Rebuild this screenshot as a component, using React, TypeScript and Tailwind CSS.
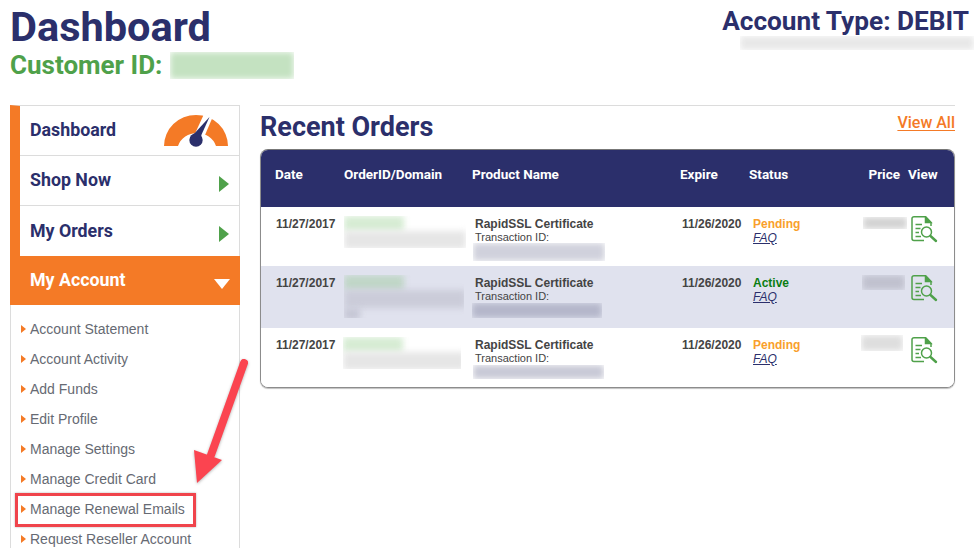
const NAVY = "#2b2f6b";

function Gauge() {
  return (
    <svg width="66" height="34" viewBox="0 0 66 34" className="block">
      <path d="M1 32 A32 31 0 0 1 65 32 L53 32 A20 19 0 0 0 15 32 Z" fill="#f47a26" />
      <path d="M41 0 L51 0 L39 28 L30 24 Z" fill="#fff" />
      <path d="M46.5 3 L37 24 L30 21 Z" fill={NAVY} />
      <circle cx="33" cy="26" r="6.7" fill={NAVY} />
    </svg>
  );
}

function DocIcon() {
  return (
    <svg width="27" height="27" viewBox="0 0 27 27" fill="none" stroke="#4fa14a" strokeWidth="1.5" className="block">
      <path d="M13 24.5 H3 Q1 24.5 1 22.5 V2.5 Q1 .8 3 .8 H14.5 L20 6.5 V10" />
      <path d="M14.5 .8 V6.5 H20 Z" fill="#4fa14a" />
      <path d="M4.5 8.5 H11 M4.5 12.5 H9.5 M4.5 16.5 H8 M4.5 20.5 H10" strokeWidth="1.6" />
      <circle cx="15.5" cy="16" r="5" />
      <path d="M19.5 20 L25 25" strokeWidth="2.4" strokeLinecap="round" />
    </svg>
  );
}

function Right() {
  return <div className="w-0 h-0 border-y-[8px] border-y-transparent border-l-[10px] border-l-[#4fa14a]" />;
}

function NavRow({ label, children, className }: { label: string; children: React.ReactNode; className: string }) {
  return (
    <div className={`border-b border-[#dcdcdc] pl-[10px] pr-[10px] flex items-center justify-between text-[17.8px] font-bold text-[#2b2f6b] ${className}`}>
      <span>{label}</span>
      {children}
    </div>
  );
}

const links = [
  "Account Statement",
  "Account Activity",
  "Add Funds",
  "Edit Profile",
  "Manage Settings",
  "Manage Credit Card",
  "Manage Renewal Emails",
  "Request Reseller Account",
];

function Blur({ box, strip }: { box: string; strip: string }) {
  return (
    <div className={`${box} overflow-hidden`}>
      <div className={`w-full h-full blur-[3px] ${strip}`} />
    </div>
  );
}

function OrderBlur({ box, green, gray, tall }: { box: string; green: string; gray: string; tall?: boolean }) {
  return (
    <div className={`${box} overflow-hidden`}>
      <div className={`w-[60px] h-[15px] blur-[3px] ${green}`} />
      <div className={`w-[122px] h-[18px] blur-[3px] ${gray}`} />
      {tall && <div className="w-[16px] h-[12px] blur-[3px] bg-[#c6c7d5]" />}
    </div>
  );
}

const rows = [
  {
    h: "h-[59px]", bg: "bg-white", status: "Pending", color: "text-[#f9a02c]",
    order: "w-[122px] h-[32px]", green: "bg-[#d6ecd3]", gray: "bg-[#e6e6e6]", tall: false,
    tx: "w-[132px] h-[18px] -ml-[2px] -mt-[1px]", txS: "bg-[#d0d1dc]",
    price: "w-[44px] h-[12px] ml-[11px] mt-[1px]", priceS: "bg-[#d2d2d2]",
  },
  {
    h: "h-[62px]", bg: "bg-[#e0e2ee]", status: "Active", color: "text-[#0a7d12]",
    order: "w-[120px] h-[43px]", green: "bg-[#c0d6c7]", gray: "bg-[#cbccd9]", tall: true,
    tx: "w-[130px] h-[15px] -ml-[3px]", txS: "bg-[#b4b6ca]",
    price: "w-[43px] h-[15px] ml-[10px]", priceS: "bg-[#c0c1ce]",
  },
  {
    h: "h-[59px]", bg: "bg-white", status: "Pending", color: "text-[#f9a02c]",
    order: "w-[118px] h-[32px] -ml-[1px]", green: "bg-[#d6ecd3]", gray: "bg-[#e6e6e6]", tall: false,
    tx: "w-[131px] h-[14px] -ml-[2px]", txS: "bg-[#c8c9d6]",
    price: "w-[42px] h-[16px] ml-[9px] -mt-[2px]", priceS: "bg-[#dedede]",
  },
];

const cols = "grid grid-cols-[83px_128px_208px_68px_104px_48px_1fr]";

export default function App() {
  return (
    <div className="relative w-[976px] h-[548px] overflow-hidden bg-white font-['Roboto',sans-serif]">
      <header className="h-[105px] pl-[10px] pr-[7px] flex justify-between items-start">
        <div>
          <h1 className="text-[41.5px] leading-[47px] pt-[3px] font-bold text-[#2b2f6b]">Dashboard</h1>
          <div className="flex items-center text-[26px] leading-[30px] font-bold text-[#4fa14a]">
            Customer ID:
            <Blur box="w-[124px] h-[27px] ml-[8px]" strip="bg-[#c4e2c1]" />
          </div>
        </div>
        <div className="flex flex-col items-end">
          <div className="text-[26.2px] leading-[30px] pt-[6px] font-bold text-[#2b2f6b]">Account Type: DEBIT</div>
          <Blur box="w-[234px] h-[14px] mr-[-5px]" strip="bg-[#e8e8e8]" />
        </div>
      </header>

      <div className="flex pl-[10px] gap-[20px] items-start">
        <aside className="w-[230px] shrink-0">
          <div className="border-t border-r border-[#dcdcdc] border-l-[10px] border-l-[#f47a26]">
            <NavRow label="Dashboard" className="h-[50px]">
              <div className="mt-[1px]"><Gauge /></div>
            </NavRow>
            <NavRow label="Shop Now" className="h-[50px]">
              <div className="pt-[6px]"><Right /></div>
            </NavRow>
            <NavRow label="My Orders" className="h-[50px] border-b-0">
              <div className="pt-[6px]"><Right /></div>
            </NavRow>
          </div>
          <div className="h-[49px] bg-[#f47a26] flex items-center justify-between pl-[20px] pr-[10px] text-[17.8px] font-bold text-white">
            <span>My Account</span>
            <div className="mt-[6px] w-0 h-0 border-x-[8px] border-x-transparent border-t-[10px] border-t-white" />
          </div>
          <ul className="border-x border-[#dcdcdc] pt-[9px] h-[250px] font-['Liberation_Sans',sans-serif] text-[14px] text-[#666a73]">
            {links.map((l) => (
              <li key={l} className="h-[30px] flex items-center pl-[10px] gap-[4px]">
                <span className="w-0 h-0 border-y-[4px] border-y-transparent border-l-[5px] border-l-[#f47a26]" />
                {l}
              </li>
            ))}
          </ul>
        </aside>

        <main className="w-[695px] shrink-0">
          <div className="border-t border-[#dcdcdc] pt-[6px] flex justify-between items-start h-[44px]">
            <h2 className="text-[27px] leading-[30px] font-bold text-[#2b2f6b]">Recent Orders</h2>
            <a className="text-[16px] leading-[18px] mt-[2px] font-medium text-[#f47a26] underline underline-offset-2">View All</a>
          </div>

          <div className="rounded-[8px] border border-[#8c8c8c] border-t-[#777] shadow-[0_1px_1px_rgba(0,0,0,0.25)] overflow-hidden">
            <div className={`${cols} h-[57px] bg-[#2b2f6b] pt-[17px] text-[13.5px] leading-[15px] font-bold text-white`}>
              <div className="pl-[14px]">Date</div>
              <div>OrderID/Domain</div>
              <div>Product Name</div>
              <div>Expire</div>
              <div className="pl-[1px]">Status</div>
              <div className="text-right -ml-[10px]">Price</div>
              <div className="pl-[8px]">View</div>
            </div>
            {rows.map((r, i) => (
              <div key={i} className={`${cols} ${r.h} ${r.bg} pt-[9px] font-['Liberation_Sans',sans-serif] text-[12px] leading-[14px]`}>
                <div className="pl-[15px] pt-[1px] font-bold text-[#444]">11/27/2017</div>
                <OrderBlur box={r.order} green={r.green} gray={r.gray} tall={r.tall} />
                <div className="pl-[3px] pt-[1px]">
                  <div className="font-bold text-[#444]">RapidSSL Certificate</div>
                  <div className="text-[11px] leading-[13px] text-[#444]">Transaction ID:</div>
                  <Blur box={r.tx} strip={r.txS} />
                </div>
                <div className="font-bold pt-[1px] text-[#444] pl-[2px]">11/26/2020</div>
                <div className="flex flex-col pt-[1px]">
                  <span className={`font-bold ${r.color} pl-[5px]`}>{r.status}</span>
                  <a className="italic underline text-[#2b2f6b] pl-[5px]">FAQ</a>
                </div>
                <div>
                  <Blur box={r.price} strip={r.priceS} />
                </div>
                <div className="pl-[11px]"><DocIcon /></div>
              </div>
            ))}
          </div>
        </main>
      </div>

      <div className="absolute left-[15px] top-[493px] w-[181px] h-[34px] border-[3px] border-[#f0444c] shadow-[0_0_2px_rgba(0,0,0,0.3)]" />
      <svg className="absolute left-[185px] top-[350px]" width="70" height="140" viewBox="0 0 70 140">
        <g style={{ filter: "drop-shadow(0 1px 1.5px rgba(0,0,0,0.3))" }}>
          <path d="M59 13 L26 105" stroke="#fb4450" strokeWidth="8" strokeLinecap="round" fill="none" />
          <path d="M9 100 L37 110 L12 133 Z" fill="#fb4450" />
        </g>
      </svg>
    </div>
  );
}
